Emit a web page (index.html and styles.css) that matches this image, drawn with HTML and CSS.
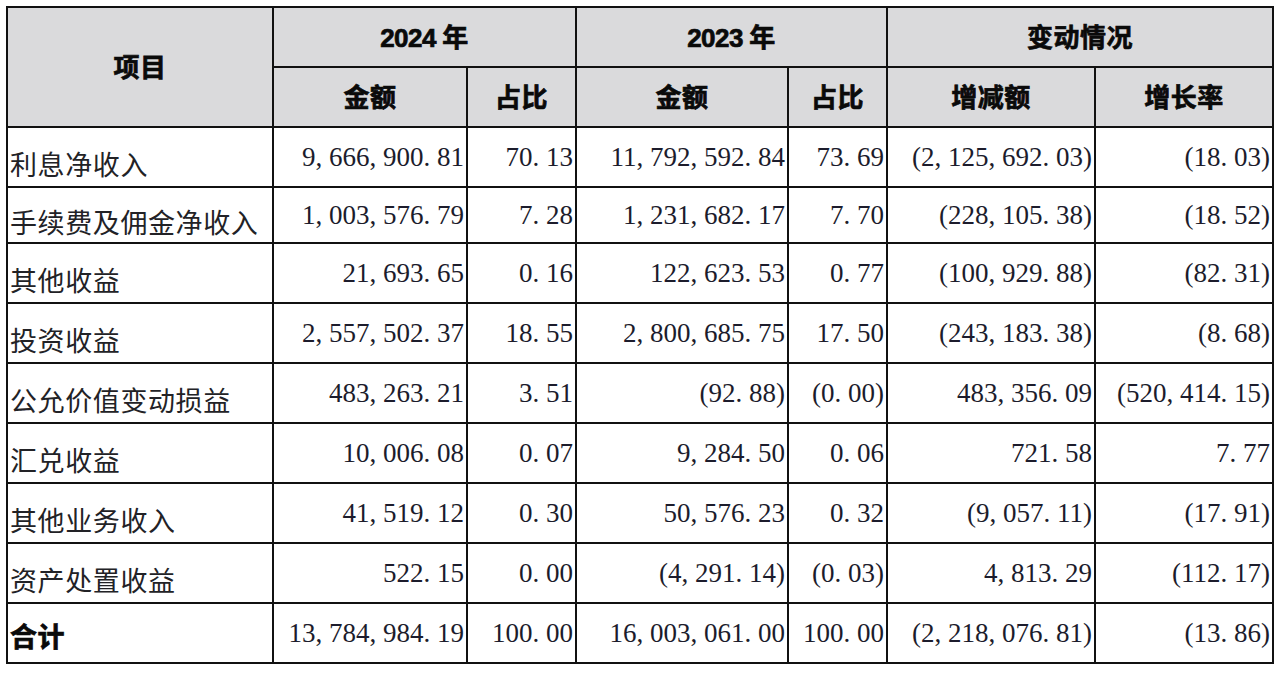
FILE: index.html
```html
<!DOCTYPE html>
<html lang="zh-CN">
<head>
<meta charset="utf-8">
<title>营业收入构成</title>
<link rel="stylesheet" href="styles.css">
</head>
<body>
<table class="fin">
  <colgroup>
    <col class="c-item">
    <col class="c-amt24">
    <col class="c-pct24">
    <col class="c-amt23">
    <col class="c-pct23">
    <col class="c-chg">
    <col class="c-rate">
  </colgroup>
  <thead>
    <tr class="hrow">
      <th rowspan="2">项目</th>
      <th colspan="2"><span class="yr">2024</span> 年</th>
      <th colspan="2"><span class="yr">2023</span> 年</th>
      <th colspan="2">变动情况</th>
    </tr>
    <tr class="hrow">
      <th>金额</th>
      <th>占比</th>
      <th>金额</th>
      <th>占比</th>
      <th>增减额</th>
      <th>增长率</th>
    </tr>
  </thead>
  <tbody>
    <tr>
      <td class="lbl">利息净收入</td>
      <td class="num">9, 666, 900. 81</td>
      <td class="num">70. 13</td>
      <td class="num">11, 792, 592. 84</td>
      <td class="num">73. 69</td>
      <td class="num">(2, 125, 692. 03)</td>
      <td class="num">(18. 03)</td>
    </tr>
    <tr class="short">
      <td class="lbl">手续费及佣金净收入</td>
      <td class="num">1, 003, 576. 79</td>
      <td class="num">7. 28</td>
      <td class="num">1, 231, 682. 17</td>
      <td class="num">7. 70</td>
      <td class="num">(228, 105. 38)</td>
      <td class="num">(18. 52)</td>
    </tr>
    <tr>
      <td class="lbl">其他收益</td>
      <td class="num">21, 693. 65</td>
      <td class="num">0. 16</td>
      <td class="num">122, 623. 53</td>
      <td class="num">0. 77</td>
      <td class="num">(100, 929. 88)</td>
      <td class="num">(82. 31)</td>
    </tr>
    <tr>
      <td class="lbl">投资收益</td>
      <td class="num">2, 557, 502. 37</td>
      <td class="num">18. 55</td>
      <td class="num">2, 800, 685. 75</td>
      <td class="num">17. 50</td>
      <td class="num">(243, 183. 38)</td>
      <td class="num">(8. 68)</td>
    </tr>
    <tr>
      <td class="lbl">公允价值变动损益</td>
      <td class="num">483, 263. 21</td>
      <td class="num">3. 51</td>
      <td class="num">(92. 88)</td>
      <td class="num">(0. 00)</td>
      <td class="num">483, 356. 09</td>
      <td class="num">(520, 414. 15)</td>
    </tr>
    <tr>
      <td class="lbl">汇兑收益</td>
      <td class="num">10, 006. 08</td>
      <td class="num">0. 07</td>
      <td class="num">9, 284. 50</td>
      <td class="num">0. 06</td>
      <td class="num">721. 58</td>
      <td class="num">7. 77</td>
    </tr>
    <tr>
      <td class="lbl">其他业务收入</td>
      <td class="num">41, 519. 12</td>
      <td class="num">0. 30</td>
      <td class="num">50, 576. 23</td>
      <td class="num">0. 32</td>
      <td class="num">(9, 057. 11)</td>
      <td class="num">(17. 91)</td>
    </tr>
    <tr>
      <td class="lbl">资产处置收益</td>
      <td class="num">522. 15</td>
      <td class="num">0. 00</td>
      <td class="num">(4, 291. 14)</td>
      <td class="num">(0. 03)</td>
      <td class="num">4, 813. 29</td>
      <td class="num">(112. 17)</td>
    </tr>
    <tr class="total">
      <td class="lbl">合计</td>
      <td class="num">13, 784, 984. 19</td>
      <td class="num">100. 00</td>
      <td class="num">16, 003, 061. 00</td>
      <td class="num">100. 00</td>
      <td class="num">(2, 218, 076. 81)</td>
      <td class="num">(13. 86)</td>
    </tr>
  </tbody>
</table>
</body>
</html>
```

FILE: styles.css
```css
html, body {
  margin: 0;
  padding: 0;
  background: #ffffff;
}

body {
  padding: 6px 0 0 6px;
}

.fin {
  border-collapse: collapse;
  table-layout: fixed;
  width: 1266px;
  color: #1c1c24;
}

.c-item { width: 266px; }
.c-amt24 { width: 194px; }
.c-pct24 { width: 109px; }
.c-amt23 { width: 212px; }
.c-pct23 { width: 99px; }
.c-chg { width: 208px; }
.c-rate { width: 178px; }

.fin th,
.fin td {
  border: 2px solid #111111;
  padding: 0;
  white-space: nowrap;
  overflow: hidden;
}

.fin th {
  background: #dadadc;
  font-family: "Noto Sans CJK SC", "Noto Sans", sans-serif;
  font-weight: 700;
  font-size: 26px;
  color: #0a0a0a;
  -webkit-text-stroke: 0.7px #0a0a0a;
  text-align: center;
  vertical-align: middle;
  letter-spacing: 0.5px;
  padding-bottom: 4px;
}

.fin .yr {
  font-family: "Liberation Sans", Arial, sans-serif;
  font-weight: 700;
  letter-spacing: -0.5px;
}

.hrow {
  height: 60px;
}

.fin tbody tr {
  height: 60px;
}

.fin tbody tr.short {
  height: 56px;
}

.fin td.lbl {
  font-family: "Noto Sans CJK SC", "Noto Sans", sans-serif;
  font-weight: 400;
  font-size: 27px;
  letter-spacing: 0.6px;
  text-align: left;
  vertical-align: middle;
  padding: 12px 0 0 2px;
  line-height: 1;
  color: #222226;
}

.fin td.num {
  font-family: "Liberation Serif", "Times New Roman", serif;
  font-size: 27px;
  text-align: right;
  vertical-align: middle;
  padding: 0 2px 0 0;
  line-height: 1;
  color: #1c1c2c;
}

.fin tr.total td.lbl {
  font-weight: 700;
  color: #0a0a0a;
  -webkit-text-stroke: 0.7px #0a0a0a;
  padding-top: 4px;
}
```
